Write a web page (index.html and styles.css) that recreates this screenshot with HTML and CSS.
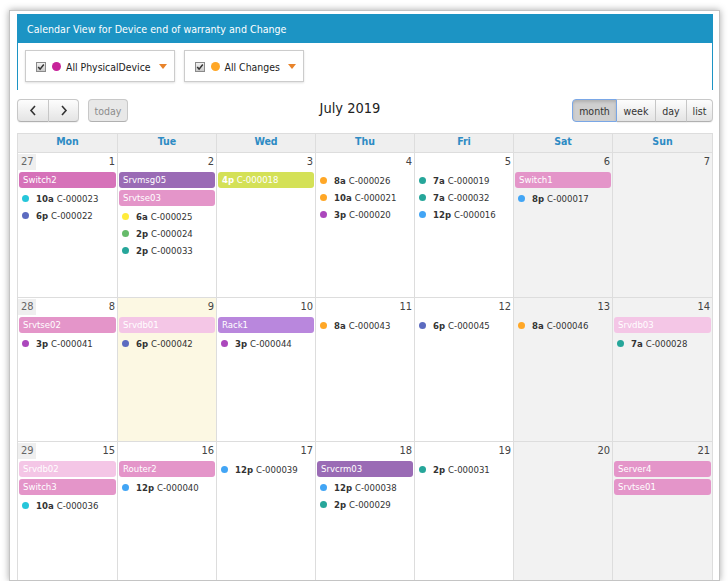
FILE: index.html
```html
<!DOCTYPE html>
<html>
<head>
<meta charset="utf-8">
<title>Calendar View</title>
<link rel="stylesheet" href="styles.css">
</head>
<body>

<div class="Frame">
    <div class="PanelHead">Calendar View for Device end of warranty and Change</div>
    <div class="PanelBody">
        <div class="Filter">
            <span class="Check"><svg width="8" height="8" viewBox="0 0 8 8"><path d="M1.2 4 L3.1 6.1 L6.8 1.5" fill="none" stroke="#333" stroke-width="1.5"/></svg></span>
            <span class="Dot Magenta"></span>
            <span class="FilterText">All PhysicalDevice</span>
            <span class="Caret"></span>
        </div>
        <div class="Filter">
            <span class="Check"><svg width="8" height="8" viewBox="0 0 8 8"><path d="M1.2 4 L3.1 6.1 L6.8 1.5" fill="none" stroke="#333" stroke-width="1.5"/></svg></span>
            <span class="Dot Orange"></span>
            <span class="FilterText">All Changes</span>
            <span class="Caret"></span>
        </div>
    </div>

    <div class="Toolbar">
        <div class="ToolLeft">
            <div class="BtnGroup">
                <span class="Btn Prev"><svg width="8" height="11" viewBox="0 0 8 11"><path d="M6 1 L2 5.5 L6 10" fill="none" stroke="#333" stroke-width="1.6"/></svg></span>
                <span class="Btn Next"><svg width="8" height="11" viewBox="0 0 8 11"><path d="M2 1 L6 5.5 L2 10" fill="none" stroke="#333" stroke-width="1.6"/></svg></span>
            </div>
            <span class="Btn TodayBtn">today</span>
        </div>
        <div class="ToolTitle">July 2019</div>
        <div class="BtnGroup">
            <span class="Btn Month Active">month</span>
            <span class="Btn Week">week</span>
            <span class="Btn Day">day</span>
            <span class="Btn List">list</span>
        </div>
    </div>

    <div class="Grid">
        <div class="Dow">Mon</div>
        <div class="Dow">Tue</div>
        <div class="Dow">Wed</div>
        <div class="Dow">Thu</div>
        <div class="Dow">Fri</div>
        <div class="Dow">Sat</div>
        <div class="Dow">Sun</div>

        <!-- week 27 -->
        <div class="Cell">
            <div class="Num"><span class="Wk">27</span>1</div>
            <div class="Bar Orchid">Switch2</div>
            <div class="Ev"><i class="Dot Cyan"></i><b>10a</b> C-000023</div>
            <div class="Ev"><i class="Dot Indigo"></i><b>6p</b> C-000022</div>
        </div>
        <div class="Cell">
            <div class="Num">2</div>
            <div class="Bar Plum">Srvmsg05</div>
            <div class="Bar Pink">Srvtse03</div>
            <div class="Ev"><i class="Dot Yellow"></i><b>6a</b> C-000025</div>
            <div class="Ev"><i class="Dot Green"></i><b>2p</b> C-000024</div>
            <div class="Ev"><i class="Dot Teal"></i><b>2p</b> C-000033</div>
        </div>
        <div class="Cell">
            <div class="Num">3</div>
            <div class="Bar Lime"><b>4p</b> C-000018</div>
        </div>
        <div class="Cell">
            <div class="Num">4</div>
            <div class="Ev"><i class="Dot Orange"></i><b>8a</b> C-000026</div>
            <div class="Ev"><i class="Dot Orange"></i><b>10a</b> C-000021</div>
            <div class="Ev"><i class="Dot Purple"></i><b>3p</b> C-000020</div>
        </div>
        <div class="Cell">
            <div class="Num">5</div>
            <div class="Ev"><i class="Dot Teal"></i><b>7a</b> C-000019</div>
            <div class="Ev"><i class="Dot Teal"></i><b>7a</b> C-000032</div>
            <div class="Ev"><i class="Dot Blue"></i><b>12p</b> C-000016</div>
        </div>
        <div class="Cell Weekend">
            <div class="Num">6</div>
            <div class="Bar Pink">Switch1</div>
            <div class="Ev"><i class="Dot Blue"></i><b>8p</b> C-000017</div>
        </div>
        <div class="Cell Weekend">
            <div class="Num">7</div>
        </div>

        <!-- week 28 -->
        <div class="Cell">
            <div class="Num"><span class="Wk">28</span>8</div>
            <div class="Bar Pink">Srvtse02</div>
            <div class="Ev"><i class="Dot Purple"></i><b>3p</b> C-000041</div>
        </div>
        <div class="Cell Today">
            <div class="Num">9</div>
            <div class="Bar Blush">Srvdb01</div>
            <div class="Ev"><i class="Dot Indigo"></i><b>6p</b> C-000042</div>
        </div>
        <div class="Cell">
            <div class="Num">10</div>
            <div class="Bar Lavender">Rack1</div>
            <div class="Ev"><i class="Dot Purple"></i><b>3p</b> C-000044</div>
        </div>
        <div class="Cell">
            <div class="Num">11</div>
            <div class="Ev"><i class="Dot Orange"></i><b>8a</b> C-000043</div>
        </div>
        <div class="Cell">
            <div class="Num">12</div>
            <div class="Ev"><i class="Dot Indigo"></i><b>6p</b> C-000045</div>
        </div>
        <div class="Cell Weekend">
            <div class="Num">13</div>
            <div class="Ev"><i class="Dot Orange"></i><b>8a</b> C-000046</div>
        </div>
        <div class="Cell Weekend">
            <div class="Num">14</div>
            <div class="Bar Blush">Srvdb03</div>
            <div class="Ev"><i class="Dot Teal"></i><b>7a</b> C-000028</div>
        </div>

        <!-- week 29 -->
        <div class="Cell">
            <div class="Num"><span class="Wk">29</span>15</div>
            <div class="Bar Blush">Srvdb02</div>
            <div class="Bar Pink">Switch3</div>
            <div class="Ev"><i class="Dot Cyan"></i><b>10a</b> C-000036</div>
        </div>
        <div class="Cell">
            <div class="Num">16</div>
            <div class="Bar Pink">Router2</div>
            <div class="Ev"><i class="Dot Blue"></i><b>12p</b> C-000040</div>
        </div>
        <div class="Cell">
            <div class="Num">17</div>
            <div class="Ev"><i class="Dot Blue"></i><b>12p</b> C-000039</div>
        </div>
        <div class="Cell">
            <div class="Num">18</div>
            <div class="Bar Plum">Srvcrm03</div>
            <div class="Ev"><i class="Dot Blue"></i><b>12p</b> C-000038</div>
            <div class="Ev"><i class="Dot Teal"></i><b>2p</b> C-000029</div>
        </div>
        <div class="Cell">
            <div class="Num">19</div>
            <div class="Ev"><i class="Dot Teal"></i><b>2p</b> C-000031</div>
        </div>
        <div class="Cell Weekend">
            <div class="Num">20</div>
        </div>
        <div class="Cell Weekend">
            <div class="Num">21</div>
            <div class="Bar Pink">Server4</div>
            <div class="Bar Pink">Srvtse01</div>
        </div>
    </div>
</div>

</body>
</html>
```

FILE: styles.css
```css
* {
    box-sizing: border-box;
}
html, body {
    margin: 0;
    background: #fff;
}
body {
    font-family: "DejaVu Sans Condensed", "Liberation Sans", sans-serif;
    font-size: 10px;
    color: #333;
}
.Frame {
    width: 711px;
    height: 571px;
    margin: 10px 0 0 9px;
    padding: 3px 6px 0 7px;
    border: 1px solid #c4c4c4;
    box-shadow: 0 0 7px rgba(0, 0, 0, 0.35);
    overflow: hidden;
    background: #fff;
}
.PanelHead {
    height: 29px;
    line-height: 30px;
    padding-left: 10px;
    background: #1c94c4;
    color: #fff;
    font-size: 10.6px;
}
.PanelBody {
    display: flex;
    gap: 9px;
    height: 47px;
    padding: 7px;
    border-left: 1px solid #1c94c4;
    border-right: 1px solid #1c94c4;
}
.Filter {
    display: flex;
    align-items: center;
    height: 32px;
    padding: 1px 7px 0 10px;
    border: 1px solid #ccc;
    box-shadow: 0 1px 2px rgba(0, 0, 0, 0.12);
    font-size: 10.4px;
    color: #222;
}
.Check {
    display: flex;
    align-items: center;
    justify-content: center;
    width: 10px;
    height: 10px;
    border: 1px solid #8a8a8a;
    background: linear-gradient(#f2f2f2, #c9c9c9);
    margin-right: 6px;
}
.Filter .Dot {
    width: 9px;
    height: 9px;
    margin-right: 5px;
}
.Caret {
    width: 0;
    height: 0;
    margin-left: 8px;
    border-left: 4px solid transparent;
    border-right: 4px solid transparent;
    border-top: 5px solid #e8832a;
}

/* toolbar */
.Toolbar {
    display: flex;
    align-items: center;
    height: 23px;
    margin-top: 9px;
}
.ToolLeft {
    display: flex;
    gap: 9px;
}
.ToolTitle {
    flex: 1;
    text-align: center;
    font-size: 14.5px;
    color: #222;
    margin-top: -5px;
}
.BtnGroup {
    display: flex;
}
.Btn {
    display: flex;
    align-items: center;
    justify-content: center;
    height: 23px;
    border: 1px solid #c8c8c8;
    border-bottom-color: #b0b0b0;
    background: linear-gradient(#fdfdfd, #e4e4e4);
    box-shadow: 0 1px 1px rgba(0, 0, 0, 0.06);
    font-size: 10.5px;
    color: #333;
}
.BtnGroup .Btn + .Btn {
    border-left: none;
}
.BtnGroup .Btn:first-child {
    border-radius: 4px 0 0 4px;
}
.BtnGroup .Btn:last-child {
    border-radius: 0 4px 4px 0;
}
.Prev { width: 32px; }
.Next { width: 30px; }
.TodayBtn {
    width: 40px;
    border-radius: 4px;
    background: #e8e8e8;
    color: #8c8c8c;
    box-shadow: none;
}
.Month { width: 45px; }
.Week { width: 39px; }
.Day { width: 31px; }
.List { width: 26px; }
.Btn.Active {
    background: #cfcfcf;
    border: 1px solid #7aa7e6;
    box-shadow: inset 0 2px 3px rgba(0, 0, 0, 0.15);
}

/* month grid */
.Grid {
    display: grid;
    grid-template-columns: 100px 99px 99px 99px 99px 99px 100px;
    grid-template-rows: 19px 145px 144px 140px;
    margin-top: 11px;
    border-top: 1px solid #ddd;
    border-left: 1px solid #ddd;
}
.Dow, .Cell {
    border-right: 1px solid #ddd;
    border-bottom: 1px solid #ddd;
}
.Dow {
    background: #efefef;
    color: #2d8bc4;
    font-weight: bold;
    font-size: 10.5px;
    text-align: center;
    line-height: 15px;
}
.Weekend {
    background: #f2f2f2;
}
.Cell.Today {
    background: #fcf8e3;
}
.Num {
    position: relative;
    height: 19px;
    padding: 2px 2px 0 0;
    text-align: right;
    font-size: 11px;
    color: #444;
}
.Wk {
    position: absolute;
    left: 0;
    top: 1px;
    width: 18px;
    height: 16px;
    padding: 1px 0 0 3px;
    text-align: left;
    background: #efefef;
    color: #666;
}
.Bar {
    height: 16px;
    line-height: 16px;
    margin: 0 1px 2px 1px;
    padding-left: 4px;
    border-radius: 3px;
    color: #fff;
    font-size: 9.5px;
    white-space: nowrap;
    overflow: hidden;
}
.Ev {
    display: flex;
    align-items: center;
    height: 17px;
    padding-left: 4px;
    white-space: nowrap;
    font-size: 9.5px;
    color: #333;
}
.Ev b {
    margin-right: 3px;
}
.Ev .Dot {
    width: 7px;
    height: 7px;
    margin-right: 7px;
}
.Dot {
    display: inline-block;
    border-radius: 50%;
    flex: none;
}

/* colours */
.Orchid { background: #d672b9; }
.Plum { background: #9a6bb5; }
.Pink { background: #e495c9; }
.Blush { background: #f4c6e6; }
.Lavender { background: #b987dd; }
.Lime { background: #d4e157; }
.Magenta { background: #c7239a; }
.Cyan { background: #26c6da; }
.Indigo { background: #5c6bc0; }
.Yellow { background: #ffeb3b; }
.Green { background: #66bb6a; }
.Teal { background: #26a69a; }
.Orange { background: #ffa726; }
.Purple { background: #ab47bc; }
.Blue { background: #42a5f5; }
```
